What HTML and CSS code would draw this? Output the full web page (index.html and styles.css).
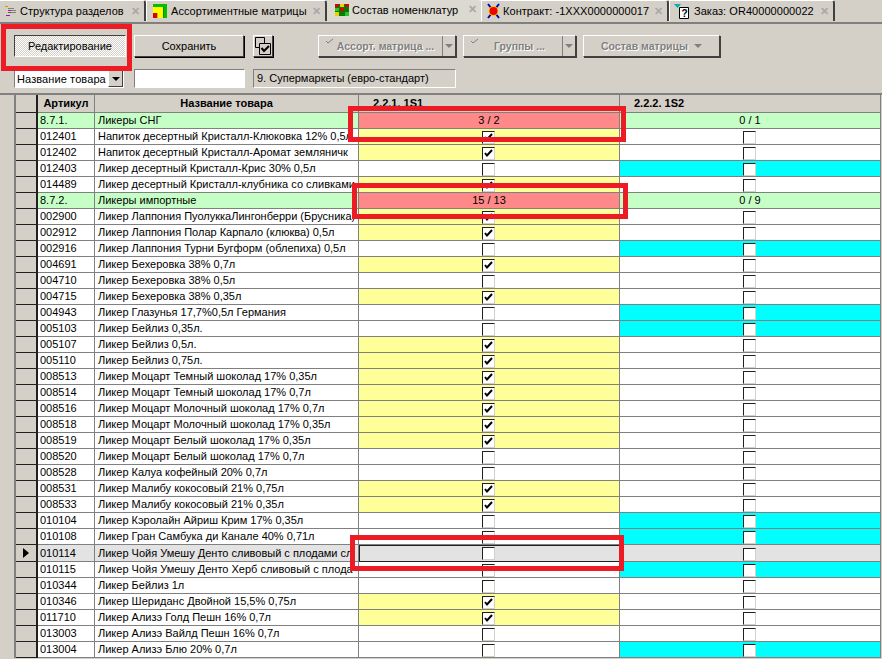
FILE: index.html
```html
<!DOCTYPE html>
<html lang="ru">
<head>
  <meta charset="UTF-8">
  <meta name="viewport" content="width=device-width, initial-scale=1.0">
  <title>Состав номенклатур</title>
  <link rel="stylesheet" href="styles.css">
</head>
<body>
  <svg class="defs" width="0" height="0">
    <symbol id="tick" viewBox="0 0 11 11">
      <path d="M2 5l2 2.500L9 2" fill="none" stroke="#000" stroke-width="2"/>
    </symbol>
    <symbol id="mini-tick" viewBox="0 0 9 7">
      <path d="M1 3l2 2 5-4" fill="none" stroke="#808080" stroke-width="1"/>
    </symbol>
  </svg>

  <div class="window">
    <!-- Вкладки -->
    <div class="tabs">
      <div class="tab tab-1">
        <svg class="tab-icon" width="12" height="12" viewBox="0 0 12 12">
          <path d="M0 1h3v1H0z" fill="#c8a000"/><path d="M3 3h6v1H3z" fill="#808080"/>
          <path d="M3 5h3v1H3z" fill="#c000c0"/><path d="M6 5h5v1H6z" fill="#808080"/>
          <path d="M3 7h3v1H3z" fill="#00a000"/><path d="M6 7h5v1H6z" fill="#808080"/>
          <path d="M1 10h4v1H1z" fill="#c000c0"/>
        </svg>
        <span>Структура разделов</span><span class="tab-close">✕</span>
      </div>
      <div class="tab tab-2">
        <svg class="tab-icon" width="14" height="14" viewBox="0 0 14 14">
          <path d="M0 0h14v14H0z" fill="#00c000"/><path d="M0 3h10v11H0z" fill="#ffff00"/>
          <path d="M0 9h4v5H0z" fill="#e00000"/><path d="M10 3h1v11h-1zM4 9h1v5H4z" fill="#000" opacity=".25"/>
        </svg>
        <span>Ассортиментные матрицы</span><span class="tab-close">✕</span>
      </div>
      <div class="tab tab-3 tab-active">
        <svg class="tab-icon" width="14" height="12" viewBox="0 0 14 12">
          <path d="M0 0h14v12H0z" fill="#008000"/>
          <path d="M0 0h4v3H0zM10 0h4v3h-4zM5 4h4v3H5z" fill="#e00000"/>
          <path d="M5 0h4v3H5zM0 8h4v4H0z" fill="#f0d000"/>
          <path d="M10 8h4v4h-4zM0 4h4v3H0z" fill="#30c030"/>
        </svg>
        <span>Состав номенклатур</span><span class="tab-close">✕</span>
      </div>
      <div class="tab tab-4">
        <svg class="tab-icon" width="13" height="16" viewBox="0 0 13 16">
          <path d="M1 1l11 14M12 1L1 15" stroke="#0000c0" stroke-width="2"/>
          <circle cx="6.500" cy="8" r="5" fill="#f0d000"/>
          <circle cx="6.500" cy="8" r="4" fill="#f00000"/>
        </svg>
        <span>Контракт: -1XXX0000000017</span><span class="tab-close">✕</span>
      </div>
      <div class="tab tab-5">
        <svg class="tab-icon" width="15" height="16" viewBox="0 0 15 16">
          <path d="M0 1h7L3.500 5z" fill="#00b0b0"/>
          <path d="M5.500 4.500h9v11h-9z" fill="#fff" stroke="#000"/>
          <text x="7.500" y="13.500" class="doc-mark">?</text>
        </svg>
        <span>Заказ: OR40000000022</span><span class="tab-close">✕</span>
      </div>
    </div>

    <!-- Панель кнопок -->
    <div class="toolbar">
      <div class="bar-row">
        <button class="btn btn-pressed">Редактирование</button>
        <button class="btn btn-save">Сохранить</button>
        <button class="btn btn-icon">
          <svg width="16" height="18" viewBox="0 0 16 18">
            <path d="M.5.500h9v10h-9z" fill="none" stroke="#000"/>
            <path d="M4.500 6.500h11v11h-11z" fill="#d4d0c8" stroke="#000"/>
            <path d="M6.500 11l2.500 3 5-5" fill="none" stroke="#000" stroke-width="2"/>
          </svg>
        </button>
        <div class="split split-1">
          <div class="split-main"><svg class="mini" width="9" height="7"><use href="#mini-tick"/></svg><span>Ассорт. матрица ...</span></div>
          <div class="split-drop"><i class="arrow"></i></div>
        </div>
        <div class="split split-2">
          <div class="split-main"><svg class="mini" width="9" height="7"><use href="#mini-tick"/></svg><span>Группы ...</span></div>
          <div class="split-drop"><i class="arrow"></i></div>
        </div>
        <div class="split split-3">
          <div class="split-main"><span>Состав матрицы</span><i class="arrow"></i></div>
        </div>
      </div>
      <div class="bar-row filter-row">
        <div class="combo"><span>Название товара</span><div class="combo-btn"><i class="arrow arrow-dark"></i></div></div>
        <div class="field"></div>
        <div class="field-static">9. Супермаркеты (евро-стандарт)</div>
      </div>
    </div>

    <!-- Таблица -->
    <div class="grid-wrap">
      <table class="grid">
        <colgroup>
          <col class="c-ind"><col class="c-art"><col class="c-name"><col class="c-m1"><col class="c-m2">
        </colgroup>
        <thead>
          <tr><th class="ind"></th><th>Артикул</th><th>Название товара</th><th class="left"><span>2.2.1. 1S1</span></th><th class="left"><span>2.2.2. 1S2</span></th></tr>
        </thead>
        <tbody>
          <tr class="group"><td class="ind"></td><td>8.7.1.</td><td>Ликеры СНГ</td><td class="over mid">3 / 2</td><td class="mid">0 / 1</td></tr>
          <tr><td class="ind"></td><td>012401</td><td>Напиток десертный Кристалл-Клюковка 12% 0,5л</td><td class="yes mid"><span class="cb"><svg><use href="#tick"/></svg></span></td><td class="mid"><span class="cb"></span></td></tr>
          <tr><td class="ind"></td><td>012402</td><td>Напиток десертный Кристалл-Аромат земляничк</td><td class="yes mid"><span class="cb"><svg><use href="#tick"/></svg></span></td><td class="mid"><span class="cb"></span></td></tr>
          <tr><td class="ind"></td><td>012403</td><td>Ликер десертный Кристалл-Крис 30% 0,5л</td><td class="mid"><span class="cb"></span></td><td class="cyan mid"><span class="cb"></span></td></tr>
          <tr><td class="ind"></td><td>014489</td><td>Ликер десертный Кристалл-клубника со сливками</td><td class="yes mid"><span class="cb"><svg><use href="#tick"/></svg></span></td><td class="mid"><span class="cb"></span></td></tr>
          <tr class="group"><td class="ind"></td><td>8.7.2.</td><td>Ликеры импортные</td><td class="over mid">15 / 13</td><td class="mid">0 / 9</td></tr>
          <tr><td class="ind"></td><td>002900</td><td>Ликер Лаппония ПуолуккаЛингонберри (Брусника)</td><td class="yes mid"><span class="cb"><svg><use href="#tick"/></svg></span></td><td class="mid"><span class="cb"></span></td></tr>
          <tr><td class="ind"></td><td>002912</td><td>Ликер Лаппония Полар Карпало (клюква) 0,5л</td><td class="yes mid"><span class="cb"><svg><use href="#tick"/></svg></span></td><td class="mid"><span class="cb"></span></td></tr>
          <tr><td class="ind"></td><td>002916</td><td>Ликер Лаппония Турни Бугформ (облепиха) 0,5л</td><td class="mid"><span class="cb"></span></td><td class="cyan mid"><span class="cb"></span></td></tr>
          <tr><td class="ind"></td><td>004691</td><td>Ликер Бехеровка 38% 0,7л</td><td class="yes mid"><span class="cb"><svg><use href="#tick"/></svg></span></td><td class="mid"><span class="cb"></span></td></tr>
          <tr><td class="ind"></td><td>004710</td><td>Ликер Бехеровка 38% 0,5л</td><td class="mid"><span class="cb"></span></td><td class="mid"><span class="cb"></span></td></tr>
          <tr><td class="ind"></td><td>004715</td><td>Ликер Бехеровка 38% 0,35л</td><td class="yes mid"><span class="cb"><svg><use href="#tick"/></svg></span></td><td class="mid"><span class="cb"></span></td></tr>
          <tr><td class="ind"></td><td>004943</td><td>Ликер Глазунья 17,7%0,5л Германия</td><td class="mid"><span class="cb"></span></td><td class="cyan mid"><span class="cb"></span></td></tr>
          <tr><td class="ind"></td><td>005103</td><td>Ликер Бейлиз 0,35л.</td><td class="mid"><span class="cb"></span></td><td class="cyan mid"><span class="cb"></span></td></tr>
          <tr><td class="ind"></td><td>005107</td><td>Ликер Бейлиз 0,5л.</td><td class="yes mid"><span class="cb"><svg><use href="#tick"/></svg></span></td><td class="mid"><span class="cb"></span></td></tr>
          <tr><td class="ind"></td><td>005110</td><td>Ликер Бейлиз 0,75л.</td><td class="yes mid"><span class="cb"><svg><use href="#tick"/></svg></span></td><td class="mid"><span class="cb"></span></td></tr>
          <tr><td class="ind"></td><td>008513</td><td>Ликер Моцарт Темный шоколад 17% 0,35л</td><td class="yes mid"><span class="cb"><svg><use href="#tick"/></svg></span></td><td class="mid"><span class="cb"></span></td></tr>
          <tr><td class="ind"></td><td>008514</td><td>Ликер Моцарт Темный шоколад 17% 0,7л</td><td class="yes mid"><span class="cb"><svg><use href="#tick"/></svg></span></td><td class="mid"><span class="cb"></span></td></tr>
          <tr><td class="ind"></td><td>008516</td><td>Ликер Моцарт Молочный шоколад 17% 0,7л</td><td class="yes mid"><span class="cb"><svg><use href="#tick"/></svg></span></td><td class="mid"><span class="cb"></span></td></tr>
          <tr><td class="ind"></td><td>008518</td><td>Ликер Моцарт Молочный шоколад 17% 0,35л</td><td class="yes mid"><span class="cb"><svg><use href="#tick"/></svg></span></td><td class="mid"><span class="cb"></span></td></tr>
          <tr><td class="ind"></td><td>008519</td><td>Ликер Моцарт Белый шоколад 17% 0,35л</td><td class="yes mid"><span class="cb"><svg><use href="#tick"/></svg></span></td><td class="mid"><span class="cb"></span></td></tr>
          <tr><td class="ind"></td><td>008520</td><td>Ликер Моцарт Белый шоколад 17% 0,7л</td><td class="mid"><span class="cb"></span></td><td class="mid"><span class="cb"></span></td></tr>
          <tr><td class="ind"></td><td>008528</td><td>Ликер Калуа кофейный 20% 0,7л</td><td class="mid"><span class="cb"></span></td><td class="mid"><span class="cb"></span></td></tr>
          <tr><td class="ind"></td><td>008531</td><td>Ликер Малибу кокосовый 21% 0,75л</td><td class="yes mid"><span class="cb"><svg><use href="#tick"/></svg></span></td><td class="mid"><span class="cb"></span></td></tr>
          <tr><td class="ind"></td><td>008533</td><td>Ликер Малибу кокосовый 21% 0,35л</td><td class="yes mid"><span class="cb"><svg><use href="#tick"/></svg></span></td><td class="mid"><span class="cb"></span></td></tr>
          <tr><td class="ind"></td><td>010104</td><td>Ликер Кэролайн Айриш Крим 17% 0,35л</td><td class="mid"><span class="cb"></span></td><td class="cyan mid"><span class="cb"></span></td></tr>
          <tr><td class="ind"></td><td>010108</td><td>Ликер Гран Самбука ди Канале 40% 0,71л</td><td class="mid"><span class="cb"></span></td><td class="cyan mid"><span class="cb"></span></td></tr>
          <tr class="current"><td class="ind"><i class="pointer"></i></td><td>010114</td><td>Ликер Чойя Умешу Денто сливовый с плодами сл</td><td class="focus mid"><span class="cb"></span></td><td class="mid"><span class="cb"></span></td></tr>
          <tr><td class="ind"></td><td>010115</td><td>Ликер Чойя Умешу Денто Херб сливовый с плода</td><td class="mid"><span class="cb"></span></td><td class="cyan mid"><span class="cb"></span></td></tr>
          <tr><td class="ind"></td><td>010344</td><td>Ликер Бейлиз 1л</td><td class="mid"><span class="cb"></span></td><td class="mid"><span class="cb"></span></td></tr>
          <tr><td class="ind"></td><td>010346</td><td>Ликер Шериданс Двойной 15,5% 0,75л</td><td class="yes mid"><span class="cb"><svg><use href="#tick"/></svg></span></td><td class="mid"><span class="cb"></span></td></tr>
          <tr><td class="ind"></td><td>011710</td><td>Ликер Ализэ Голд Пешн 16% 0,7л</td><td class="yes mid"><span class="cb"><svg><use href="#tick"/></svg></span></td><td class="mid"><span class="cb"></span></td></tr>
          <tr><td class="ind"></td><td>013003</td><td>Ликер Ализэ Вайлд Пешн 16% 0,7л</td><td class="mid"><span class="cb"></span></td><td class="mid"><span class="cb"></span></td></tr>
          <tr><td class="ind"></td><td>013004</td><td>Ликер Ализэ Блю 20% 0,7л</td><td class="mid"><span class="cb"></span></td><td class="cyan mid"><span class="cb"></span></td></tr>
        </tbody>
      </table>
    </div>

    <!-- Красные рамки поверх скриншота -->
    <div class="mark mark-edit"></div>
    <div class="mark mark-sum1"></div>
    <div class="mark mark-sum2"></div>
    <div class="mark mark-row"></div>
  </div>
</body>
</html>
```

FILE: styles.css
```css
* {
  box-sizing: border-box;
}
html, body {
  margin: 0;
  padding: 0;
}
body {
  background-color: #d4d0c8;
  font-family: "Liberation Sans", Arial, sans-serif;
  font-size: 11px;
  color: #000;
  overflow: hidden;
}
.defs {
  position: absolute;
}
.window {
  position: relative;
  width: 882px;
  height: 659px;
  overflow: hidden;
}

/* Вкладки */
.tabs {
  display: flex;
  align-items: flex-end;
  height: 24px;
  background-color: #d4d0c8;
  border-bottom: 2px solid #808080;
  font-size: 11px;
  letter-spacing: .05px;
  padding-bottom: 1px;
}
.tab {
  display: flex;
  align-items: center;
  height: 21px;
  padding-left: 5px;
  border-top: 1px solid #fff;
  border-left: 1px solid #fff;
  border-right: 2px solid #404040;
  border-radius: 0 3px 0 0;
  white-space: nowrap;
}
.tab-icon {
  flex: none;
  margin-right: 3px;
}
.tab-close {
  margin-left: auto;
  margin-right: 4px;
  color: #a8a8a8;
  font-size: 11px;
  font-weight: bold;
}
.tab-1 { width: 146px; border-left: 0; }
.tab-2 { width: 181px; padding-left: 6px; }
.tab-3 { width: 154px; padding-left: 8px; border-left: 0; }
.tab-4 { width: 188px; padding-left: 5px; }
.tab-5 { width: 166px; padding-left: 4px; }
.tab-2 .tab-icon { margin-right: 4px; }
.tab-5 .tab-icon { margin-right: 5px; }
.tab-active {
  height: 23px;
  margin-bottom: -1px;
  padding-bottom: 3px;
  background-color: #dcd9d1;
  border-right: 0;
}
.doc-mark {
  font-family: "Liberation Sans", Arial, sans-serif;
  font-size: 10px;
  font-weight: bold;
}

/* Панель кнопок */
.toolbar {
  height: 70px;
  padding: 11px 0 0 14px;
}
.bar-row {
  display: flex;
  align-items: flex-start;
}
.filter-row {
  margin-top: 12px;
}
.btn {
  height: 22px;
  padding: 0;
  font-family: inherit;
  font-size: 11px;
  color: #000;
  background-color: #d4d0c8;
  border: 1px solid;
  border-color: #fff #404040 #404040 #fff;
  box-shadow: 1px 1px 0 #000;
}
.btn-pressed {
  width: 112px;
  border-color: #404040 #fff #fff #404040;
  box-shadow: none;
  background-color: #e8e6e0;
  background-image: repeating-conic-gradient(#fff 0 25%, #d4d0c8 0 50%);
  background-size: 2px 2px;
}
.btn-save {
  width: 110px;
  margin-left: 8px;
}
.btn-icon {
  width: 20px;
  margin-left: 9px;
  display: flex;
  align-items: center;
  justify-content: center;
}
.split {
  display: flex;
  height: 22px;
  border: 1px solid;
  border-color: #fff #404040 #404040 #fff;
  box-shadow: 1px 1px 0 #404040;
  color: #808080;
  font-size: 10.5px;
  font-weight: bold;
  text-shadow: 1px 1px 0 #fff;
}
.split-main {
  position: relative;
  flex: 1;
  display: flex;
  align-items: center;
  justify-content: center;
}
.split-drop {
  width: 13px;
  border-left: 1px solid #808080;
  display: flex;
  align-items: center;
  justify-content: center;
}
.split-1 { width: 138px; margin-left: 45px; }
.split-2 { width: 113px; margin-left: 7px; }
.split-3 { width: 137px; margin-left: 7px; }
.split-1 .split-main span { margin-left: 10px; }
.split-2 .split-main span { margin-left: 13px; }
.split-3 .split-main span { margin-right: 0; }
.mini {
  position: absolute;
  left: 6px;
  top: 2px;
}
.arrow {
  display: block;
  width: 0;
  height: 0;
  border-left: 4px solid transparent;
  border-right: 4px solid transparent;
  border-top: 4px solid #808080;
}
.arrow-dark {
  border-top-color: #000;
}
.split-3 .arrow {
  margin-left: 6px;
  margin-right: 0;
}
.combo {
  display: flex;
  align-items: center;
  width: 110px;
  height: 19px;
  font-size: 11px;
  letter-spacing: .1px;
  background-color: #fff;
  border: 1px solid;
  border-color: #808080 #fff #fff #808080;
}
.combo span {
  flex: 1;
  padding-left: 2px;
  white-space: nowrap;
}
.combo-btn {
  width: 15px;
  height: 17px;
  flex: none;
  display: flex;
  align-items: center;
  justify-content: center;
  background-color: #d4d0c8;
  border: 1px solid;
  border-color: #fff #404040 #404040 #fff;
}
.field {
  width: 111px;
  height: 19px;
  margin-left: 10px;
  background-color: #fff;
  border: 1px solid;
  border-color: #808080 #fff #fff #808080;
}
.field-static {
  width: 203px;
  height: 19px;
  margin-left: 8px;
  padding-left: 3px;
  line-height: 17px;
  font-size: 11px;
  border: 1px solid;
  border-color: #808080 #fff #fff #808080;
  white-space: nowrap;
}

/* Таблица */
.grid-wrap {
  height: 566px;
  padding-left: 14px;
  border-top: 2px solid #808080;
  margin-top: -1px;
}
.grid {
  table-layout: fixed;
  width: 867px;
  border-collapse: separate;
  border-spacing: 0;
  border-left: 2px solid #808080;
}
.c-ind { width: 22px; }
.c-art { width: 57px; }
.c-name { width: 264px; }
.c-m1 { width: 261px; }
.c-m2 { width: 261px; }
.grid th, .grid td {
  height: 16px;
  padding: 0 0 0 3px;
  border-right: 1px solid #808080;
  border-bottom: 1px solid #808080;
  white-space: nowrap;
  overflow: hidden;
  line-height: 15px;
}
.grid th {
  height: 18px;
  padding-left: 0;
  font-size: 11px;
  text-align: center;
  background-color: #d4d0c8;
}
.grid th.left {
  padding-left: 3px;
  text-align: left;
}
.grid th.left span {
  margin-left: 11px;
}
.grid td:nth-child(2) {
  padding-left: 2px;
}
.grid td {
  background-color: #fff;
}
.grid .ind {
  padding: 0;
  background-color: #d4d0c8;
  border-right: 2px solid #202020;
  border-bottom: 1px solid #202020;
  border-top: 0;
}
.grid td.mid {
  padding: 0;
  text-align: center;
}
.group td {
  background-color: #c6ffc6;
}
.grid td.yes {
  background-color: #ffff99;
}
.grid td.cyan {
  background-color: #00ffff;
}
.grid td.over {
  background-color: #ff8888;
}
.current td {
  background-color: #e3e3e3;
}
.grid td.focus {
  border: 1px solid #202020;
}
.pointer {
  display: block;
  width: 0;
  height: 0;
  margin-left: 7px;
  border-top: 5px solid transparent;
  border-bottom: 5px solid transparent;
  border-left: 6px solid #000;
}
.cb {
  display: inline-block;
  width: 13px;
  height: 13px;
  margin: 2px 2px 0 0;
  vertical-align: top;
  background-color: #fff;
  border: 1px solid;
  border-color: #202020 #d4d0c8 #d4d0c8 #202020;
}
.focus .cb {
  margin-top: 1px;
}
.cb svg {
  display: block;
  width: 11px;
  height: 11px;
}

/* Красные рамки */
.mark {
  position: absolute;
  border: 5px solid #ed1c24;
}
.mark-edit {
  left: 1px;
  top: 24px;
  width: 131px;
  height: 47px;
}
.mark-sum1 {
  left: 348px;
  top: 106px;
  width: 278px;
  height: 36px;
}
.mark-sum2 {
  left: 352px;
  top: 183px;
  width: 276px;
  height: 36px;
}
.mark-row {
  left: 350px;
  top: 535px;
  width: 274px;
  height: 36px;
}
```
